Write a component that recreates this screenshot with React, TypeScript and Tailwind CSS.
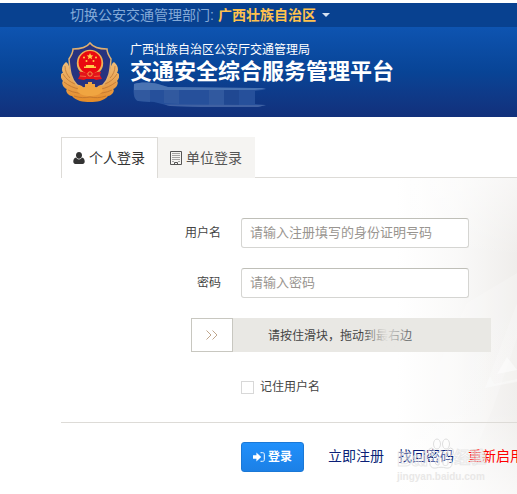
import React, { useState } from "react";

function PoliceEmblem() {
  return (
    <svg viewBox="0 0 58 62" className="w-[58px] h-[62px] shrink-0" aria-hidden="true">
      <defs>
        <linearGradient id="gold" x1="0" y1="0" x2="0" y2="1">
          <stop offset="0" stopColor="#efbd78" />
          <stop offset="0.6" stopColor="#e89e49" />
          <stop offset="1" stopColor="#e58c28" />
        </linearGradient>
      </defs>

      {/* Branches */}
      <g fill="url(#gold)">
        <path d="M5 20 C1 23 0 28 2 31 C-1 31 -1 36 2 39 C0 40 2 46 6 47 C4 48 6 53 11 54 C15 59 22 60 29 60 L29 46 C18 44 11 37 9 27 C8 24 7 21 5 20 Z" />
        <path d="M53 20 C57 23 58 28 56 31 C59 31 59 36 56 39 C58 40 56 46 52 47 C54 48 52 53 47 54 C43 59 36 60 29 60 L29 46 C40 44 47 37 49 27 C50 24 51 21 53 20 Z" />
      </g>
      <g fill="none" stroke="#b0672a" strokeWidth="0.8" opacity="0.75">
        <path d="M4 24 C4 29 6 33 9 36 M2 32 C5 37 9 40 14 42 M3 40 C8 44 13 46 18 47 M7 48 C13 51 19 51 24 52 M13 54 C19 56 24 56 29 55" />
        <path d="M54 24 C54 29 52 33 49 36 M56 32 C53 37 49 40 44 42 M55 40 C50 44 45 46 40 47 M51 48 C45 51 39 51 34 52 M45 54 C39 56 34 56 29 55" />
      </g>

      {/* Shield */}
      <path
        d="M29 1 C26 5 19 7 12 7 C12 11 10 14 8 17 C9 30 10 37 16 43 L22 46 L36 46 L42 43 C48 37 49 30 50 17 C48 14 46 11 46 7 C39 7 32 5 29 1 Z"
        fill="#27337f"
        stroke="#e0b070"
        strokeWidth="1.5"
      />

      {/* Cog at the foot */}
      <path
        d="M16 49 L18 43 L21 44 L22 46 L24 45 L24 42 L27 42 L27 40 L31 40 L31 42 L34 42 L34 45 L36 46 L37 44 L40 43 L42 49 C39 53 34 54 29 54 C24 54 19 53 16 49 Z"
        fill="#f0a541"
      />

      {/* National emblem */}
      <circle cx="29" cy="21" r="13.2" fill="#f0b257" />
      <circle cx="29" cy="20.5" r="11.4" fill="#ea0a10" />
      <path d="M29 11 l1 2.2 2.3 .2 -1.8 1.5 .6 2.3 -2.1 -1.2 -2.1 1.2 .6 -2.3 -1.8 -1.5 2.3 -.2 Z" fill="#ffce4a" />
      <g fill="#ffce4a">
        <circle cx="23" cy="15.5" r="1" />
        <circle cx="35" cy="15.5" r="1" />
        <circle cx="25.5" cy="19" r="1" />
        <circle cx="32.5" cy="19" r="1" />
        <path d="M25 23 H33 V24.5 H35 V26 H23 V24.5 H25 Z" />
      </g>
      <path d="M18 30 C22 29 25 32 29 32 C33 32 36 29 40 30 L39 33 L41 37 L35 38 L33 37 L25 37 L23 38 L17 37 L19 33 Z" fill="#e5141a" />
      <circle cx="29" cy="32" r="2.2" fill="#e5141a" stroke="#f4a64c" strokeWidth="0.9" />
      <path d="M19 34 L25 34.5 M33 34.5 L39 34" fill="none" stroke="#f08a4c" strokeWidth="0.7" />
    </svg>
  );
}

function UserIcon() {
  return (
    <svg viewBox="0 0 12 12" className="w-3 h-3 shrink-0" fill="currentColor" aria-hidden="true">
      <path d="M6 0 C8 0 9 1.4 9 3.2 C9 5 7.8 6.8 6 6.8 C4.2 6.8 3 5 3 3.2 C3 1.4 4 0 6 0 Z" />
      <path d="M3.1 5.6 C3.8 6.9 4.8 7.4 6 7.4 C7.2 7.4 8.2 6.9 8.9 5.6 C11 6 11.7 7.7 11.7 9.6 C11.7 11.2 10.9 12 9.6 12 L2.4 12 C1.1 12 0.3 11.2 0.3 9.6 C0.3 7.7 1 6 3.1 5.6 Z" />
    </svg>
  );
}

function BuildingIcon() {
  return (
    <svg viewBox="0 0 12 14" className="w-3 h-3.5 shrink-0" aria-hidden="true">
      <path d="M0.5 0.5 H11.5 V13.5 H0.5 Z" fill="none" stroke="currentColor" />
      <path
        d="M2.5 2.5 H10 M2.5 4.5 H10 M2.5 6.5 H10 M2.5 8.5 H10 M2.5 10.5 H4 M8.5 10.5 H10"
        stroke="currentColor"
        strokeDasharray="1 1"
        fill="none"
      />
      <path d="M4.5 13.5 V11.5 H7.5 V13.5" fill="none" stroke="currentColor" />
    </svg>
  );
}

function SignInIcon() {
  return (
    <svg viewBox="0 0 12 10" className="w-3 h-2.5 shrink-0" aria-hidden="true">
      <path d="M0 3.2 H3.4 V0.6 L8.2 5 L3.4 9.4 V6.8 H0 Z" fill="currentColor" />
      <path d="M7.5 0.7 H9.6 C10.7 0.7 11.3 1.3 11.3 2.3 V7.7 C11.3 8.7 10.7 9.3 9.6 9.3 H7.5" fill="none" stroke="currentColor" strokeWidth="1" />
    </svg>
  );
}

function Backdrop() {
  return (
    <svg
      viewBox="0 0 120 316"
      preserveAspectRatio="none"
      className="absolute right-0 top-0 w-[120px] h-full pointer-events-none"
      aria-hidden="true"
    >
      <defs>
        <linearGradient id="haze" x1="0" y1="0" x2="1" y2="0">
          <stop offset="0" stopColor="#f1f0ee" stopOpacity="0" />
          <stop offset="0.5" stopColor="#f1f0ee" stopOpacity="0.4" />
          <stop offset="1" stopColor="#efedeb" stopOpacity="1" />
        </linearGradient>
        <linearGradient id="glow" x1="0" y1="0" x2="0" y2="1">
          <stop offset="0" stopColor="#ffffff" stopOpacity="0.5" />
          <stop offset="0.25" stopColor="#ffffff" stopOpacity="0" />
          <stop offset="0.75" stopColor="#ffffff" stopOpacity="0.1" />
          <stop offset="1" stopColor="#ffffff" stopOpacity="0.6" />
        </linearGradient>
      </defs>
      <rect width="120" height="316" fill="url(#haze)" />
      <path d="M120 95 L70 125 L40 190 L20 316 L60 316 L96 230 L120 160 Z" fill="#ffffff" opacity="0.2" />
      <path d="M120 125 L88 210 L120 203 Z" fill="#ffffff" opacity="0.2" />
      <path d="M110 179 L100 196 L120 192 Z" fill="#ffffff" opacity="0.5" />
      <path d="M93 198 L88 210 L120 204 L120 201 L97 206 Z" fill="#ffffff" opacity="0.3" />
      <rect width="120" height="316" fill="url(#glow)" />
    </svg>
  );
}

function Watermark() {
  return (
    <div className="absolute left-[397px] top-[260px] pointer-events-none select-none whitespace-nowrap" aria-hidden="true">
      <div className="flex items-end h-8 font-bold text-[#ffffff55] [-webkit-text-stroke:1px_#e2e2e2bb]">
        <span className="text-[20px] leading-[22px]">Bai</span>
        <svg viewBox="0 0 26 32" className="w-[26px] h-8" fill="#ffffff55" stroke="#dfdfdf" strokeWidth="1">
          <ellipse cx="9" cy="6" rx="3.5" ry="5" />
          <ellipse cx="18" cy="6" rx="3.5" ry="5" />
          <ellipse cx="3.5" cy="14" rx="3" ry="4" />
          <ellipse cx="22.5" cy="14" rx="3" ry="4" />
          <path d="M13 13 C17 13 18 18 22 21 C26 25 24 31 18 30 C15 29 11 29 8 30 C2 31 0 25 4 21 C8 18 9 13 13 13 Z" />
          <path d="M11 19 V27 M11 23 C6 21 6 28 11 27 M15 22 V26 C15 28 20 28 20 26 V22" fill="none" />
        </svg>
        <span className="text-base leading-6">经验</span>
      </div>
      <div className="text-[10px] leading-[14px] font-bold text-[#e9e8e7]">jingyan.baidu.com</div>
    </div>
  );
}

export default function App() {
  const [tab, setTab] = useState("personal");
  const [slide, setSlide] = useState(0);

  const activeTab = "border border-b-0 border-[#dddbd7] bg-white text-[#333333]";
  const idleTab = "bg-[#f5f4f2] text-[#555555]";

  return (
    <div className="min-h-screen overflow-hidden bg-white pt-[3px] font-['Liberation_Sans','Noto_Sans_CJK_SC',sans-serif] text-[#444444]">
      {/* Region switch */}
      <div className="flex items-center h-6 pl-[70px] bg-[#084190] text-sm whitespace-nowrap">
        <span className="text-[#84aad8]">切换公安交通管理部门:</span>
        <button type="button" className="flex items-center gap-1.5 ml-1 font-bold text-[#ffc14d]">
          广西壮族自治区
          <span className="border-x-4 border-x-transparent border-t-4 border-t-[#d5e2f2]" />
        </button>
      </div>

      {/* Header */}
      <header className="flex items-start h-[90px] pl-[61px] pt-[15px] bg-linear-to-b from-[#0e54b1] via-[#084496] to-[#12307b] text-white whitespace-nowrap">
        <PoliceEmblem />
        <div className="ml-[11px]">
          <p className="text-xs leading-4">广西壮族自治区公安厅交通管理局</p>
          <h1 className="text-[22px] leading-7 font-bold">交通安全综合服务管理平台</h1>
          <svg viewBox="0 0 136 26" className="w-[136px] h-[26px] -mt-1" aria-hidden="true">
            <path d="M4 2 C10 0 20 0 28 2 L38 5 L132 6 L136 7 L132 8 L125 9 V22 L136 23 L128 25 L70 25 L40 24 L24 20 L8 19 C3 17 3 8 4 2 Z" fill="#26509b" />
            <path d="M4 2 C10 0 20 0 28 2 L38 5 L132 6 L136 7 L125 8 H4 Z" fill="#4a74b3" />
            <path d="M4 8 H20 V20 L8 19 C4 17 4 12 4 8 Z M34 8 H49 V22 L34 21 Z M79 8 H94 V23 H79 Z" fill="#31599f" />
            <path d="M94 8 H109 V23 H94 Z" fill="#204892" />
            <path d="M34 22.5 L40 24 L70 25 H128 L136 23 Z" fill="#4061a2" />
          </svg>
        </div>
      </header>

      {/* Login type */}
      <div role="tablist" className="flex pl-[61px] pt-5 text-sm whitespace-nowrap">
        <button
          type="button"
          role="tab"
          aria-selected={tab === "personal"}
          onClick={() => setTab("personal")}
          className={`flex items-center gap-1 pl-[11px] w-[97px] h-[41px] ${tab === "personal" ? activeTab : idleTab}`}
        >
          <UserIcon />
          个人登录
        </button>
        <button
          type="button"
          role="tab"
          aria-selected={tab === "company"}
          onClick={() => setTab("company")}
          className={`flex items-center gap-1 pl-3 w-[97px] h-[41px] ${tab === "company" ? activeTab : idleTab}`}
        >
          <BuildingIcon />
          单位登录
        </button>
        <div className="flex-1 border-b border-[#dddbd7]" />
      </div>

      <form className="relative pl-[61px] pb-[22px]" onSubmit={(e) => e.preventDefault()}>
        <Backdrop />

        <div className="relative flex flex-col gap-5 pt-10">
          <div className="flex items-center gap-5">
            <label htmlFor="username" className="w-[160px] shrink-0 text-right text-xs">用户名</label>
            <input
              id="username"
              type="text"
              placeholder="请输入注册填写的身份证明号码"
              className="w-full max-w-[228px] h-[30px] px-2 pb-0.5 text-[13px] bg-white border border-[#d5d5d2] border-t-[#bfbfb8] rounded-[3px] placeholder:text-[#999590]"
            />
          </div>

          <div className="flex items-center gap-5">
            <label htmlFor="password" className="w-[160px] shrink-0 text-right text-xs">密码</label>
            <input
              id="password"
              type="password"
              placeholder="请输入密码"
              className="w-full max-w-[228px] h-[30px] px-2 pb-0.5 text-[13px] bg-white border border-[#d5d5d2] border-t-[#bfbfb8] rounded-[3px] placeholder:text-[#999590]"
            />
          </div>

          {/* Slide to verify */}
          <div className="pl-[130px]">
            <div className="relative w-full max-w-[300px] h-[34px] bg-[#e9e8e4]">
              <label htmlFor="verify" className="flex items-center h-full pt-0.5 pl-[77px] text-xs whitespace-nowrap">
                请按住滑块，拖动到最右边
              </label>
              <span className="absolute left-[170px] top-1 w-[50px] h-[26px] bg-linear-to-r from-[#e9e8e400] via-[#e9e8e4ee] to-[#e9e8e433]" />
              <input
                id="verify"
                type="range"
                min={0}
                max={100}
                value={slide}
                onChange={(e) => setSlide(Number(e.target.value))}
                className="absolute inset-0 w-full h-full appearance-none bg-transparent cursor-pointer [&::-webkit-slider-thumb]:appearance-none [&::-webkit-slider-thumb]:w-[42px] [&::-webkit-slider-thumb]:h-[34px] [&::-webkit-slider-thumb]:bg-white [&::-webkit-slider-thumb]:border [&::-webkit-slider-thumb]:border-[#c8c7c0]"
              />
              <svg
                viewBox="0 0 12 10"
                className="absolute top-3 ml-[15px] w-3 h-2.5 pointer-events-none"
                style={{ left: `${slide * 0.86}%` }}
                fill="none"
                stroke="#c0a68c"
                aria-hidden="true"
              >
                <path d="M0.5 0.5 L5 5 L0.5 9.5 M6.5 0.5 L11 5 L6.5 9.5" />
              </svg>
            </div>
          </div>
        </div>

        <div className="relative flex items-center gap-1.5 pl-[180px] mt-[26px] h-[18px]">
          <input id="remember" type="checkbox" className="appearance-none w-[13px] h-[13px] bg-white border border-[#d8d8d8] checked:bg-[#1e88f0]" />
          <label htmlFor="remember" className="text-xs">记住用户名</label>
        </div>

        <div className="relative flex items-center pl-[180px] mt-[26px] pt-[19px] border-t border-[#dddbd7] text-sm whitespace-nowrap">
          <button type="submit" className="flex items-center justify-center gap-[3px] w-[63px] h-[30px] shrink-0 rounded-[3px] border border-[#1a78d6] bg-linear-to-b from-[#2090fb] to-[#1c80e6] text-xs font-bold text-white">
            <SignInIcon />
            登录
          </button>
          <a href="#register" className="ml-6 pb-0.5 text-[#0b1f78]">立即注册</a>
          <a href="#recover" className="ml-[14px] pb-0.5 text-[#0b1f78]">找回密码</a>
          <a href="#reactivate" className="ml-[14px] pb-0.5 text-[#ff0000]">重新启用</a>
        </div>

        <Watermark />
      </form>
    </div>
  );
}
